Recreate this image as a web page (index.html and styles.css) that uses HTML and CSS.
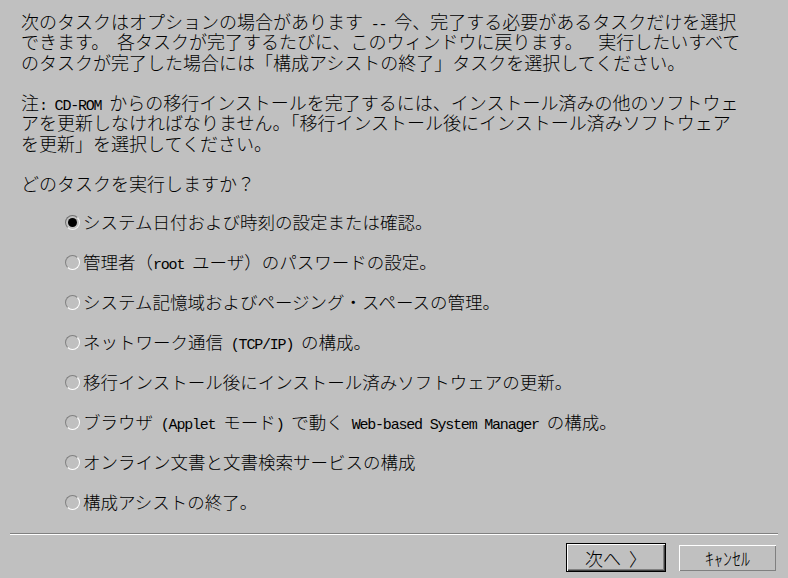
FILE: index.html
```html
<!DOCTYPE html>
<html lang="ja">
<head>
  <meta charset="UTF-8" />
  <meta name="viewport" content="width=device-width, initial-scale=1" />
  <title>構成アシスト</title>
  <link rel="stylesheet" href="styles.css">
</head>
<body>
  <div class="dialog">
    <div class="intro">
      <div class="para">
        <div class="line">次のタスクはオプションの場合があります<span class="en"> -- </span>今、完了する必要があるタスクだけを選択</div>
        <div class="line">できます。<span class="en"> </span>各タスクが完了するたびに、このウィンドウに戻ります。<span class="en">  </span>実行したいすべて</div>
        <div class="line">のタスクが完了した場合には「構成アシストの終了」タスクを選択してください。</div>
      </div>
      <div class="para">
        <div class="line">注<span class="en">: CD-ROM </span>からの移行インストールを完了するには、インストール済みの他のソフトウェ</div>
        <div class="line">アを更新しなければなりません。「移行インストール後にインストール済みソフトウェア</div>
        <div class="line">を更新」を選択してください。</div>
      </div>
      <div class="para">
        <div class="line">どのタスクを実行しますか？</div>
      </div>
    </div>

    <ul class="tasks">
      <li class="task"><span class="radio checked"></span><span class="label">システム日付および時刻の設定または確認。</span></li>
      <li class="task"><span class="radio"></span><span class="label">管理者（<span class="en">root </span>ユーザ）のパスワードの設定。</span></li>
      <li class="task"><span class="radio"></span><span class="label">システム記憶域およびページング・スペースの管理。</span></li>
      <li class="task"><span class="radio"></span><span class="label">ネットワーク通信<span class="en"> (TCP/IP) </span>の構成。</span></li>
      <li class="task"><span class="radio"></span><span class="label">移行インストール後にインストール済みソフトウェアの更新。</span></li>
      <li class="task"><span class="radio"></span><span class="label">ブラウザ<span class="en"> (Applet </span>モード<span class="en">) </span>で動く<span class="en"> Web-based System Manager </span>の構成。</span></li>
      <li class="task"><span class="radio"></span><span class="label">オンライン文書と文書検索サービスの構成</span></li>
      <li class="task"><span class="radio"></span><span class="label">構成アシストの終了。</span></li>
    </ul>

    <div class="separator"></div>

    <div class="buttons">
      <button class="btn btn-default">次へ&nbsp;&nbsp;〉</button>
      <button class="btn btn-cancel">ｷｬﾝｾﾙ</button>
    </div>
  </div>
</body>
</html>
```

FILE: styles.css
```css
html, body {
  margin: 0;
  padding: 0;
  background: #c0c0c0;
}

body {
  font-family: "Noto Sans CJK JP", "Noto Sans", sans-serif;
  font-size: 18px;
  font-weight: 300;
  color: #000;
}

.dialog {
  width: 788px;
  height: 578px;
  overflow: hidden;
}

.intro {
  padding: 11px 0 0 21px;
}

.para {
  margin-bottom: 20.25px;
}

.para:last-child {
  margin-bottom: 0;
}

.line {
  height: 20.25px;
  line-height: 20.25px;
  white-space: pre;
}

/* half-width latin runs: narrow monospace */
.en {
  font-family: "Liberation Mono", monospace;
  font-size: 15px;
  font-weight: 400;
  letter-spacing: -1.2px;
  line-height: 1;
  white-space: pre;
}

.tasks {
  list-style: none;
  margin: 9px 0 0;
  padding: 0 0 0 65px;
}

.task {
  display: flex;
  align-items: center;
  height: 40px;
  font-size: 17.5px;
}

.label {
  line-height: 20px;
  white-space: pre;
}

.radio {
  box-sizing: border-box;
  width: 15px;
  height: 15px;
  margin-right: 3px;
  border: 1px solid;
  border-color: #808080 #ffffff #ffffff #808080;
  border-radius: 50%;
  display: flex;
  align-items: center;
  justify-content: center;
  flex: none;
}

.radio.checked {
  border-color: #707070 #f0f0f0 #f0f0f0 #707070;
}

.radio.checked::after {
  content: "";
  width: 9px;
  height: 9px;
  border-radius: 50%;
  background: #000;
}

.separator {
  margin: 11px 10px 0;
  border-top: 1px solid #808080;
  border-bottom: 1px solid #ffffff;
}

.buttons {
  display: flex;
  justify-content: flex-end;
  align-items: center;
  gap: 13px;
  padding: 8px 12px 0 0;
}

.btn {
  box-sizing: border-box;
  margin: 0;
  padding: 0;
  background: #c0c0c0;
  color: #000;
  font-family: "Noto Sans CJK JP", sans-serif;
  font-size: 18px;
  font-weight: 300;
  line-height: 1;
  border: none;
  cursor: pointer;
}

.btn-default {
  width: 100px;
  height: 29px;
  border: 1px solid #000;
  box-shadow: inset 1px 1px #ffffff, inset -1px -1px #404040, inset -2px -2px #808080;
}

.btn-cancel {
  width: 97px;
  height: 26px;
  box-shadow: inset 1px 1px #ffffff, inset -1px -1px #808080;
}
```
